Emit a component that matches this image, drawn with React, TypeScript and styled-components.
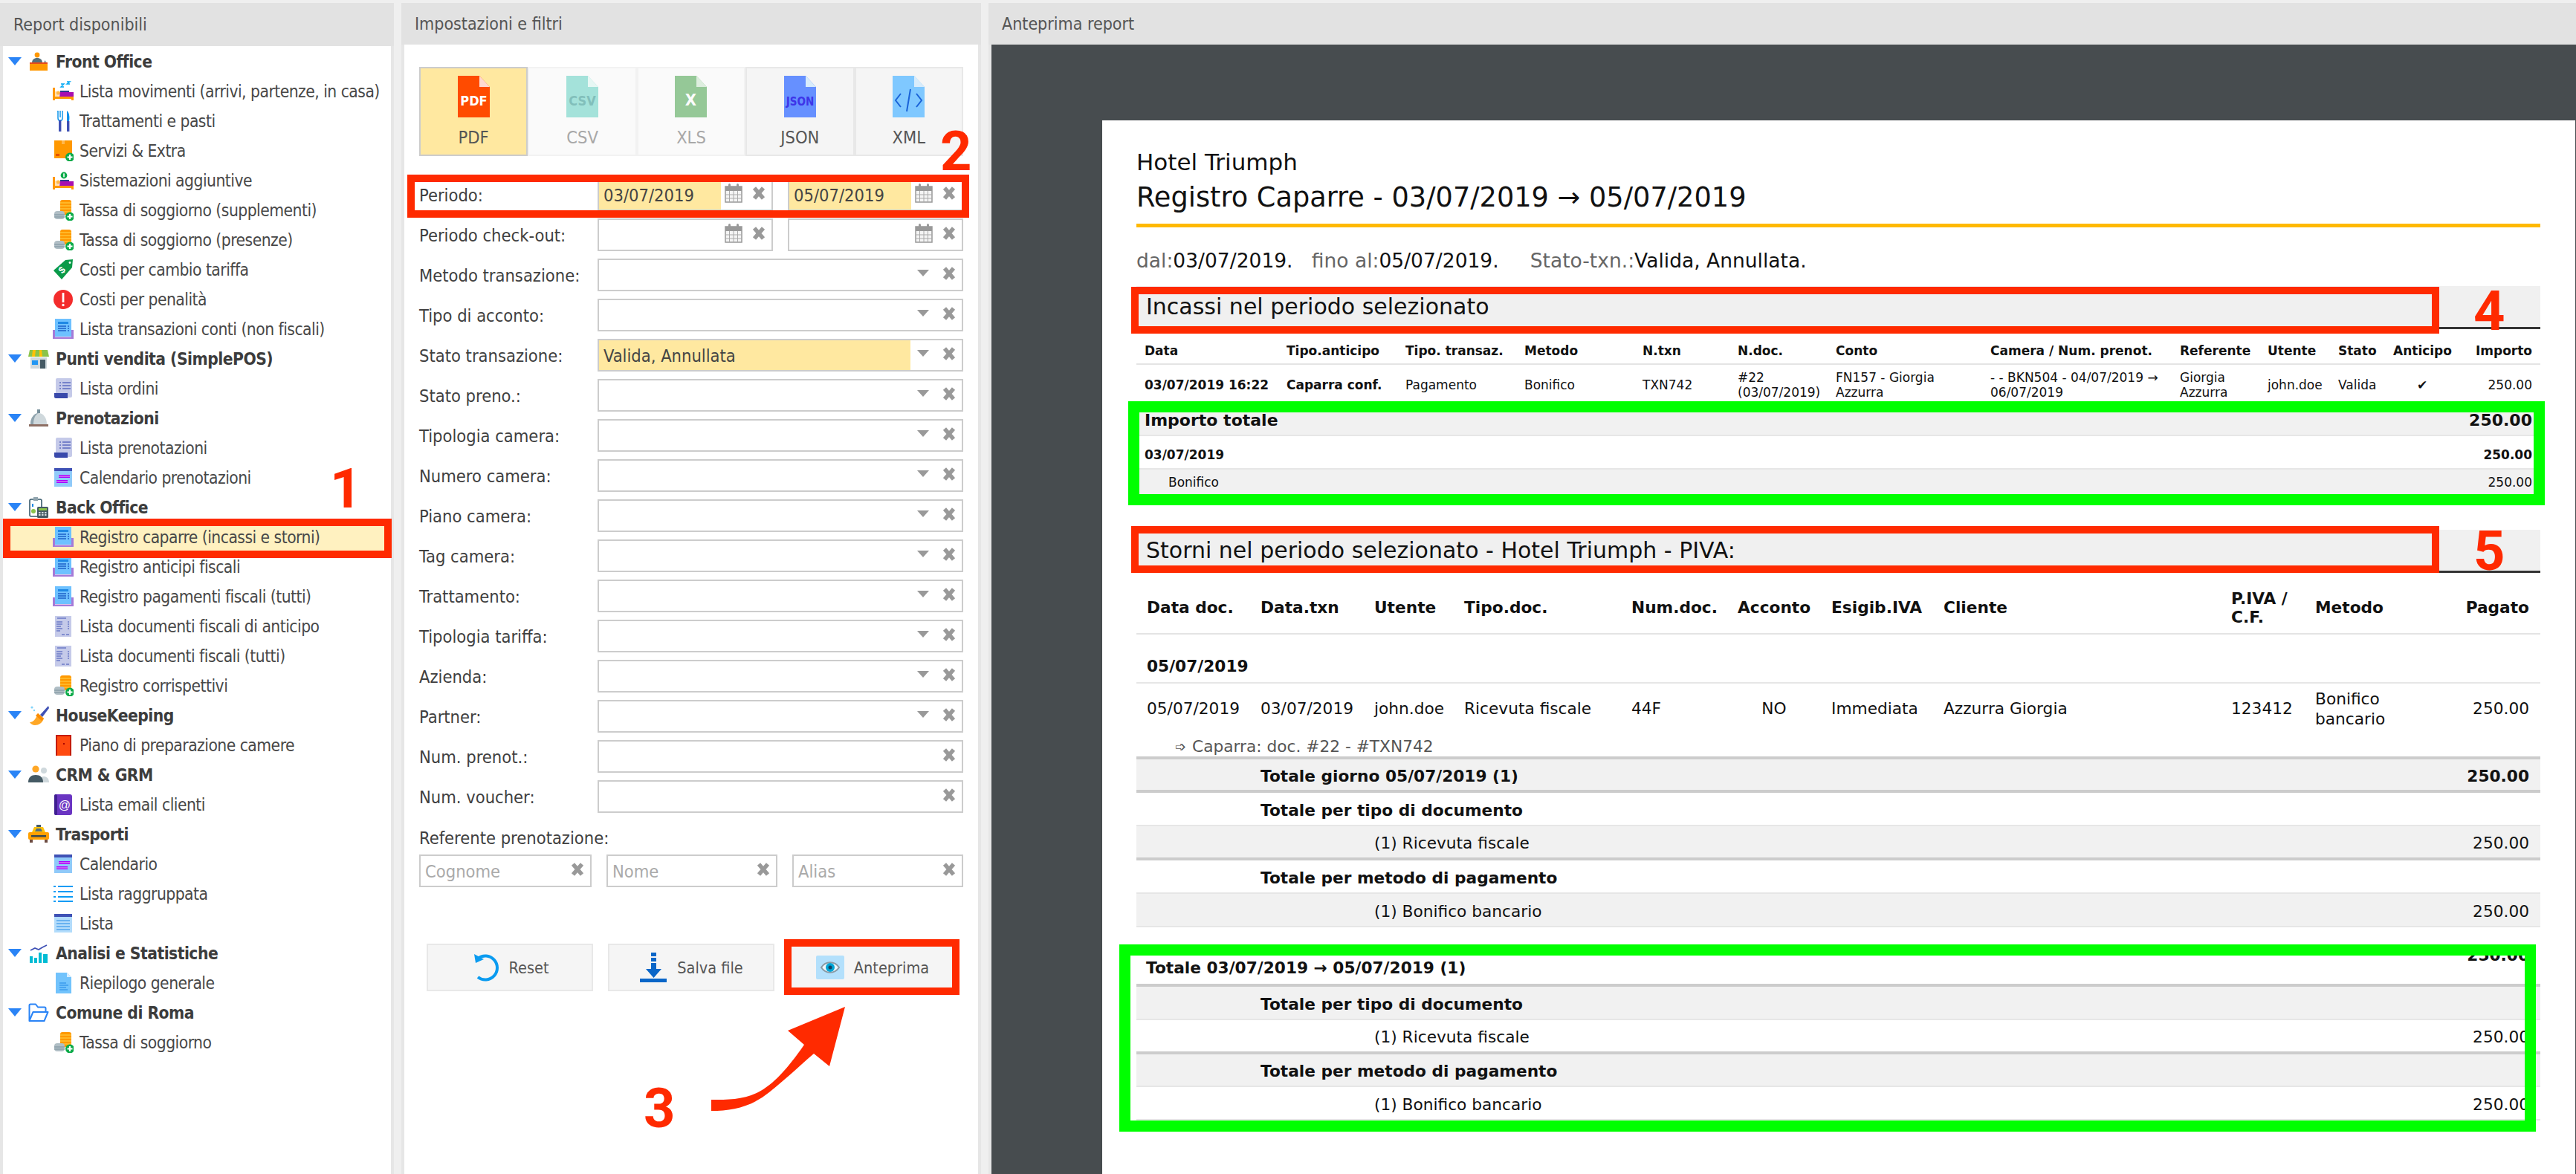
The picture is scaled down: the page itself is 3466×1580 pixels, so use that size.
import React from 'react';
import styled, { createGlobalStyle } from 'styled-components';

const uiFont = '"DejaVu Sans Condensed", "DejaVu Sans", sans-serif';
const docFont = '"DejaVu Sans", sans-serif';

const GlobalStyle = createGlobalStyle`
    html, body {
        margin: 0;
        padding: 0;
        background: #efefef;
    }
    * {
        box-sizing: border-box;
    }
`;

const Page = styled.div`
    position: relative;
    width: 3466px;
    height: 1580px;
    overflow: hidden;
    display: flex;
    gap: 10px;
    padding-top: 4px;
    background: #efefef;
    font-family: ${uiFont};
    font-stretch: condensed;
`;

const Panel = styled.section<{ $width?: number }>`
    display: flex;
    flex-direction: column;
    flex: ${(p) => (p.$width ? `0 0 ${p.$width}px` : '1 1 0')};
    background: #e6e6e6;
    min-width: 0;
`;

const PanelTitle = styled.h2<{ $pad: number; $height: number }>`
    margin: 0;
    height: ${(p) => p.$height}px;
    flex: none;
    display: flex;
    align-items: center;
    padding-left: ${(p) => p.$pad}px;
    background: #e2e2e2;
    color: #555;
    font-size: 23px;
    font-weight: 400;
`;

const PanelBody = styled.div`
    flex: 1;
    margin: 0 4px;
    background: #fff;
`;

/* tree */
const TreeRow = styled.div<{ $child?: boolean; $selected?: boolean }>`
    height: 40px;
    display: flex;
    align-items: center;
    padding-top: 1px;
    padding-left: ${(p) => (p.$child ? 67 : 7)}px;
    background: ${(p) => (p.$selected ? '#fff1c0' : 'transparent')};
    color: ${(p) => (p.$child ? '#484848' : '#3c3c3c')};
    font-size: 22.6px;
    letter-spacing: -0.5px;
    font-weight: ${(p) => (p.$child ? 400 : 700)};
    white-space: nowrap;
`;

const Caret = styled.span`
    width: 0;
    height: 0;
    flex: none;
    margin-right: 9px;
    border-left: 9px solid transparent;
    border-right: 9px solid transparent;
    border-top: 11px solid #2a84f6;
`;

const TreeIconBox = styled.span<{ $child?: boolean }>`
    display: flex;
    flex: none;
    margin-right: ${(p) => (p.$child ? 8 : 9)}px;
`;

const IconSvg = styled.svg`
    display: block;
    width: 28px;
    height: 28px;
`;

/* form */
const Form = styled.div`
    padding: 30px 20px 0;
`;

const FormatBar = styled.div`
    display: grid;
    grid-template-columns: repeat(5, 1fr);
    height: 120px;
    margin-bottom: 30px;
`;

const FormatTab = styled.div<{ $active?: boolean; $disabled?: boolean }>`
    display: flex;
    flex-direction: column;
    align-items: center;
    padding-top: 10px;
    border: 2px solid ${(p) => (p.$active ? '#ccc' : p.$disabled ? '#f2f2f2' : '#e8e8e8')};
    background: ${(p) => (p.$active ? '#ffe8a0' : p.$disabled ? '#fafafa' : '#f5f5f5')};
    color: ${(p) => (p.$disabled ? '#a8a8a8' : '#555')};
    font-size: 23.5px;
`;

const FormatIconSvg = styled.svg<{ $disabled?: boolean }>`
    width: 43px;
    height: 56px;
    flex: none;
    margin-bottom: 13px;
    opacity: ${(p) => (p.$disabled ? 0.55 : 1)};
`;

const FieldRow = styled.div`
    display: flex;
    height: 44px;
    margin-bottom: 10px;
    align-items: center;
`;

const FieldLabel = styled.label`
    flex: 0 0 240px;
    padding-top: 2px;
    color: #404040;
    font-size: 23.5px;
`;

const FieldGroup = styled.div`
    flex: 1;
    display: flex;
    gap: 20px;
    height: 100%;
`;

const Field = styled.div`
    flex: 1;
    min-width: 0;
    display: flex;
    border: 2px solid #ccc;
    background: #fff;
`;

const FieldText = styled.div<{ $filled?: boolean; $placeholder?: boolean }>`
    flex: 1;
    min-width: 0;
    display: flex;
    align-items: center;
    padding: 2px 0 0 6px;
    background: ${(p) => (p.$filled ? '#ffe8a0' : '#fff')};
    color: ${(p) => (p.$placeholder ? '#aaa' : '#444')};
    font-size: 23.5px;
`;

const FieldTools = styled.div`
    flex: none;
    display: flex;
    align-items: center;
    gap: 13px;
    padding: 0 8px 0 5px;
`;

const ClearIcon = styled.svg`
    display: block;
    width: 18px;
    height: 18px;
    margin-top: -5px;
`;

const CalendarIcon = styled.svg`
    display: block;
    width: 24px;
    height: 26px;
    margin-top: -5px;
`;

const DropArrow = styled.span`
    width: 0;
    height: 0;
    margin: -5px 5px 0 4px;
    border-left: 8px solid transparent;
    border-right: 8px solid transparent;
    border-top: 9px solid #999;
`;

const SubLabel = styled.div`
    margin-top: 20px;
    height: 36px;
    color: #404040;
    font-size: 23.5px;
`;

const ReferentGrid = styled.div`
    display: grid;
    grid-template-columns: 232px 230px 230px;
    gap: 20px;
    height: 44px;
`;

const ButtonBar = styled.div`
    display: grid;
    grid-template-columns: repeat(3, 224px);
    gap: 20px;
    margin: 76px 0 0 10px;
`;

const ActionButton = styled.button`
    height: 64px;
    display: flex;
    align-items: center;
    justify-content: center;
    gap: 13px;
    padding: 0;
    border: 2px solid #e8e8e8;
    background: #f5f5f5;
    color: #555;
    font-family: inherit;
    font-stretch: condensed;
    font-size: 21.5px;
`;

const ButtonIcon = styled.svg`
    width: 38px;
    height: 40px;
    flex: none;
`;

/* report */
const PreviewBody = styled.div`
    flex: 1;
    display: flex;
    flex-direction: column;
    margin-left: 4px;
    padding: 102px 1px 0 149px;
    background: #474c4f;
    min-height: 0;
`;

const Paper = styled.div`
    flex: 1;
    background: #fff;
    padding: 36px 47px 0 46px;
    color: #111;
    font-family: ${docFont};
    font-stretch: normal;
`;

const HotelName = styled.div`
    height: 40px;
    line-height: 40px;
    font-size: 31px;
`;

const ReportTitle = styled.h1`
    margin: 6px 0 0;
    padding-bottom: 13px;
    border-bottom: 5px solid #ffb900;
    font-size: 36.7px;
    font-weight: 400;
    line-height: 44px;
`;

const Filters = styled.div`
    height: 40px;
    line-height: 40px;
    margin: 25px 0 14px;
    font-size: 26.5px;
    color: #666;
    white-space: pre;
`;

const FilterValue = styled.span`
    color: #111;
`;

const SectionBand = styled.h3<{ $top?: number }>`
    display: flex;
    align-items: center;
    height: 58px;
    margin: ${(p) => p.$top || 0}px 0 0;
    padding: 0 0 0 13px;
    background: #f0f0f0;
    border-bottom: 3px solid #333;
    font-size: 30px;
    font-weight: 400;
`;

const Cols = styled.div<{ $cols: string; $pad: string; $size: number }>`
    display: grid;
    grid-template-columns: ${(p) => p.$cols};
    padding: ${(p) => p.$pad};
    font-size: ${(p) => p.$size}px;
`;

const HeadRow = styled(Cols)<{ $height: number }>`
    height: ${(p) => p.$height}px;
    align-items: center;
    border-bottom: 2px solid #e4e4e4;
    font-weight: 700;
`;

const DataRow = styled(Cols)<{ $height: number }>`
    height: ${(p) => p.$height}px;
    align-items: center;
    line-height: 1.2;
`;

const Cell = styled.div<{ $align?: string; $bold?: boolean; $trim?: number }>`
    text-align: ${(p) => p.$align || 'left'};
    font-weight: ${(p) => (p.$bold ? 700 : 'inherit')};
    padding-right: ${(p) => p.$trim || 0}px;
    white-space: nowrap;
`;

const SumRow = styled.div<{
    $height: number;
    $size: number;
    $indent: number;
    $right: number;
    $gray?: boolean;
    $bold?: boolean;
    $drop?: number;
    $edge?: string;
}>`
    display: flex;
    align-items: center;
    justify-content: space-between;
    height: ${(p) => p.$height}px;
    padding: ${(p) => p.$drop || 0}px ${(p) => p.$right}px 0 ${(p) => p.$indent}px;
    background: ${(p) => (p.$gray ? '#f1f1f1' : '#fff')};
    border-bottom: ${(p) => p.$edge || 'none'};
    font-size: ${(p) => p.$size}px;
    font-weight: ${(p) => (p.$bold ? 700 : 400)};
`;

const GrandValue = styled.span`
    margin-top: -34px;
`;

const NoteLine = styled.div`
    box-sizing: content-box;
    height: 28px;
    display: flex;
    align-items: center;
    gap: 8px;
    padding: 4px 0 0 52px;
    color: #555;
    font-size: 21.7px;
    border-bottom: 4px solid #ccc;
`;

const NoteGlyph = styled.span`
    font-size: 18px;
`;

/* annotations painted on top of the screenshot */
const Mark = styled.div<{ $x: number; $y: number; $w: number; $h: number; $color: string; $t: number }>`
    position: absolute;
    left: ${(p) => p.$x}px;
    top: ${(p) => p.$y}px;
    width: ${(p) => p.$w}px;
    height: ${(p) => p.$h}px;
    border: ${(p) => p.$t}px solid ${(p) => p.$color};
    pointer-events: none;
`;

const MarkNumber = styled.div<{ $x: number; $y: number }>`
    position: absolute;
    left: ${(p) => p.$x}px;
    top: ${(p) => p.$y}px;
    color: #ff2a00;
    font-family: Roboto, "Liberation Sans", sans-serif;
    font-stretch: normal;
    font-size: 74px;
    font-weight: 700;
    line-height: 74px;
`;

const MarkArrow = styled.svg`
    position: absolute;
    left: 950px;
    top: 1350px;
    width: 195px;
    height: 150px;
`;

type IconName =
    | 'desk' | 'bedZ' | 'cutlery' | 'box' | 'bedInfo' | 'coins' | 'tag' | 'alert' | 'receipt'
    | 'store' | 'listDoc' | 'bell' | 'calendar' | 'clipboard' | 'fiscal' | 'broom' | 'door'
    | 'people' | 'atBook' | 'taxi' | 'bullets' | 'lines' | 'chart' | 'blueDoc' | 'folder';

const Plus = () => (
    <g>
        <circle cx="23" cy="22.5" r="6" fill="#0aaa48" />
        <path d="M23 19v7M19.5 22.5h7" stroke="#fff" strokeWidth="2.2" />
    </g>
);

const Bed = () => (
    <g>
        <rect x="0" y="9" width="3" height="17" fill="#ff9800" />
        <rect x="0" y="21" width="28" height="3" fill="#ff9800" />
        <rect x="25" y="15" width="3" height="11" fill="#ff9800" />
        <rect x="3" y="14" width="5" height="7" fill="#ffe0b2" />
        <circle cx="7.5" cy="16" r="2.6" fill="#ffb74d" />
        <path d="M10 15h18v6H9z" fill="#a80fb0" />
        <path d="M10 13h12v2H10z" fill="#2b3990" />
    </g>
);

const icons: Record<IconName, React.ReactNode> = {
    desk: (
        <g>
            <circle cx="12" cy="5" r="3.4" fill="#ff9800" />
            <path d="M5 16c0-5 3-7 7-7s7 2 7 7z" fill="#546e7a" />
            <path d="M20 16l2.5-4 3 4z" fill="#90a4ae" />
            <rect x="2" y="15" width="24" height="3" fill="#e64a19" />
            <rect x="2" y="17" width="24" height="9" fill="#ff9800" />
        </g>
    ),
    bedZ: (
        <g>
            <Bed />
            <path d="M11 4h4l-4 4h4M19 1h4l-4 3h4" stroke="#03a9f4" strokeWidth="1.4" fill="none" />
        </g>
    ),
    cutlery: (
        <g>
            <path d="M7 0v9M10 0v9M13 0v9M6 0h1v10c0 2 1 3 2 3h2c1 0 2-1 2-3V0" stroke="#0090ea" strokeWidth="1.4" fill="none" />
            <rect x="8" y="13" width="3.4" height="15" fill="#3f51b5" />
            <path d="M19 0c3 2 4 8 3 14h-3z" fill="#0090ea" />
            <rect x="19" y="14" width="3.4" height="14" fill="#3f51b5" />
        </g>
    ),
    box: (
        <g>
            <rect x="2" y="0" width="24" height="24" fill="#ff9800" />
            <rect x="12" y="0" width="4" height="5" fill="#ffb74d" />
            <rect x="4" y="18" width="5" height="3" fill="#e65100" />
            <Plus />
        </g>
    ),
    bedInfo: (
        <g>
            <Bed />
            <circle cx="15" cy="7" r="4.4" fill="#0aaa48" />
            <rect x="14.2" y="4.4" width="1.6" height="5" fill="#fff" />
        </g>
    ),
    coins: (
        <g>
            <rect x="10" y="0" width="15" height="20" rx="3" fill="#ff9800" />
            <path d="M10 4h15M10 8h15M10 12h15M10 16h15" stroke="#ffd54f" strokeWidth="1.2" />
            <rect x="2" y="15" width="14" height="11" rx="4" fill="#b0bec5" />
            <path d="M2 20h14M2 23h14" stroke="#78909c" strokeWidth="1" />
            <Plus />
        </g>
    ),
    tag: (
        <g>
            <path d="M1 15L17 1l10-1-1 11L12 27z" fill="#0a9a48" />
            <circle cx="23" cy="4.5" r="1.4" fill="#fff" />
            <text x="9" y="19" fontSize="13" fontWeight="700" fill="#fff" transform="rotate(-45 12 15)" fontFamily="Liberation Sans">$</text>
        </g>
    ),
    alert: (
        <g>
            <circle cx="14" cy="14" r="13" fill="#f32c2c" />
            <rect x="12.6" y="5" width="2.8" height="13" fill="#fff" />
            <circle cx="14" cy="21.5" r="1.7" fill="#fff" />
        </g>
    ),
    receipt: (
        <g>
            <path d="M0 15v12h28V15z" fill="#a57ad8" />
            <rect x="3" y="0" width="22" height="24" fill="#6ec1ff" />
            <rect x="7" y="4" width="14" height="3" fill="#1e88e5" />
            <path d="M7 10h11M7 13h11M7 16h11M20 10h2M20 13h2M20 16h2" stroke="#1e60c8" strokeWidth="1.3" />
            <rect x="3" y="24" width="22" height="1" fill="#e1bee7" />
        </g>
    ),
    store: (
        <g>
            <rect x="3" y="12" width="22" height="15" fill="#cfd8dc" />
            <rect x="5" y="16" width="8" height="6" fill="#2196f3" />
            <rect x="16" y="15" width="7" height="12" fill="#455a64" />
            <path d="M2 2h24l2 9H0z" fill="#8bc34a" />
            <path d="M6 2l-1 9h4l1-9zM15 2l0 9h4l-1-9z" fill="#ffc107" />
        </g>
    ),
    listDoc: (
        <g>
            <rect x="4" y="0" width="22" height="26" rx="2" fill="#c5cae9" />
            <path d="M9 6h2M13 6h11M9 10h2M13 10h11M9 14h2M13 14h11" stroke="#5c6bc0" strokeWidth="1.4" />
            <path d="M2 20h18v7H4c-1 0-2-1-2-2z" fill="#3949ab" />
        </g>
    ),
    bell: (
        <g>
            <rect x="12" y="2" width="4" height="5" fill="#78909c" />
            <path d="M3 22c0-9 5-15 11-15s11 6 11 15z" fill="#cfd8dc" />
            <path d="M3 22c0-9 5-15 11-15-5 2-7 8-7 15z" fill="#90a4ae" />
            <rect x="1" y="22" width="26" height="3" fill="#8d6e63" />
        </g>
    ),
    calendar: (
        <g>
            <rect x="2" y="2" width="24" height="24" fill="#90caf9" />
            <rect x="2" y="1" width="24" height="4" fill="#3f51b5" />
            <path d="M8 10h15v4H8zM5 17h15v4H5z" fill="#aa00ff" />
            <path d="M8 12h15M5 19h15" stroke="#e1bee7" strokeWidth="1" />
        </g>
    ),
    clipboard: (
        <g>
            <rect x="2" y="3" width="16" height="23" rx="2" fill="#fff" stroke="#37596b" strokeWidth="1.6" />
            <rect x="7" y="0" width="6" height="5" fill="#90a4ae" />
            <rect x="5" y="9" width="2" height="4" fill="#1e88e5" />
            <circle cx="7" cy="19" r="3" fill="#8bc34a" />
            <rect x="12" y="13" width="15" height="15" rx="1.5" fill="#455a64" />
            <rect x="14" y="15" width="11" height="3" fill="#8bc34a" />
            <path d="M14 21h11M14 24h11" stroke="#cfd8dc" strokeWidth="2" strokeDasharray="2.5 1.5" />
        </g>
    ),
    fiscal: (
        <g>
            <rect x="3" y="0" width="22" height="28" fill="#c5cae9" />
            <path d="M6 3h12M5 8h8M5 11h8M5 14h6M5 17h8M5 20h5M20 8h2M20 11h2M20 14h2M20 17h2M12 25h4M18 25h4" stroke="#3f51b5" strokeWidth="1.2" />
        </g>
    ),
    broom: (
        <g>
            <circle cx="5" cy="3" r="1.6" fill="#81d4fa" />
            <circle cx="8" cy="7" r="1.2" fill="#81d4fa" />
            <path d="M27 1l-11 12 3 3L28 4z" fill="#3f51b5" />
            <path d="M13 11l8 7c-2 6-7 9-12 9-3 0-6-2-7-4 5 0 8-4 11-12z" fill="#ffa726" />
            <path d="M13 11l8 7-3 3-8-7z" fill="#fb8c00" />
        </g>
    ),
    door: (
        <g>
            <rect x="4" y="0" width="21" height="28" fill="#c41c00" />
            <rect x="6" y="2" width="17" height="26" fill="#ff4a10" />
            <rect x="14" y="11" width="2" height="2" fill="#a00" />
        </g>
    ),
    people: (
        <g>
            <circle cx="21" cy="8" r="4" fill="#cfd8dc" />
            <path d="M15 24c0-6 3-8 6-8s7 2 7 8z" fill="#cfd8dc" />
            <circle cx="10" cy="6" r="4.6" fill="#ffa726" />
            <path d="M0 24c0-7 4-10 10-10s10 3 10 10z" fill="#455a64" />
        </g>
    ),
    atBook: (
        <g>
            <rect x="2" y="0" width="24" height="28" rx="3" fill="#6a35c2" />
            <rect x="2" y="0" width="4" height="28" rx="2" fill="#3f1f91" />
            <text x="15.5" y="20" fontSize="16" textAnchor="middle" fill="#fff" fontFamily="Liberation Sans">@</text>
        </g>
    ),
    taxi: (
        <g>
            <rect x="11" y="1" width="6" height="3" fill="#455a64" />
            <path d="M5 11l3-7h12l3 7z" fill="#ffc107" />
            <path d="M9 10l2-4h6l2 4z" fill="#546e7a" />
            <rect x="0" y="11" width="28" height="10" rx="2" fill="#ffa000" />
            <rect x="4" y="15" width="20" height="2.5" fill="#37474f" />
            <rect x="2" y="21" width="4" height="4" fill="#6d4c41" />
            <rect x="22" y="21" width="4" height="4" fill="#6d4c41" />
        </g>
    ),
    bullets: (
        <g>
            <path d="M1 4h3M7 4h20M1 11h3M7 11h20M1 18h3M7 18h20M1 24h3M7 24h20" stroke="#0a9bf5" strokeWidth="2.2" />
        </g>
    ),
    lines: (
        <g>
            <rect x="2" y="2" width="24" height="24" fill="#b3dcfb" />
            <rect x="2" y="1" width="24" height="4" fill="#3f51b5" />
            <path d="M5 10h18M5 14h18M5 18h18M5 22h18" stroke="#1e88e5" strokeWidth="1.1" />
        </g>
    ),
    chart: (
        <g>
            <path d="M3 10l6-3 5 2 5-3 6-3" stroke="#3f51b5" strokeWidth="1.8" fill="none" />
            <rect x="2" y="18" width="4" height="9" fill="#00bcd4" />
            <rect x="8" y="20" width="4" height="7" fill="#00bcd4" />
            <rect x="14" y="13" width="4" height="14" fill="#00bcd4" />
            <rect x="20" y="15" width="6" height="12" fill="#00bcd4" />
        </g>
    ),
    blueDoc: (
        <g>
            <path d="M4 0h15l6 6v22H4z" fill="#72c3fc" />
            <path d="M19 0l6 6h-6z" fill="#d6eeff" />
            <path d="M9 14h9M9 17h12M9 20h9M9 23h11" stroke="#1e88e5" strokeWidth="1.2" />
        </g>
    ),
    folder: (
        <g>
            <path d="M1.5 25V4c0-1 .5-1.5 1.5-1.5h7l3 4h9c1 0 1.5.5 1.5 1.5v4M1.5 25l5-12h20l-5 12z" fill="#fff" stroke="#2a84f6" strokeWidth="2" strokeLinejoin="round" />
        </g>
    ),
};

const TreeIcon = ({ name }: { name: IconName }) => <IconSvg viewBox="0 0 28 28">{icons[name]}</IconSvg>;

const tree: { label: string; icon: IconName; items: { label: string; icon: IconName; selected?: boolean }[] }[] = [
    {
        label: 'Front Office',
        icon: 'desk',
        items: [
            { label: 'Lista movimenti (arrivi, partenze, in casa)', icon: 'bedZ' },
            { label: 'Trattamenti e pasti', icon: 'cutlery' },
            { label: 'Servizi & Extra', icon: 'box' },
            { label: 'Sistemazioni aggiuntive', icon: 'bedInfo' },
            { label: 'Tassa di soggiorno (supplementi)', icon: 'coins' },
            { label: 'Tassa di soggiorno (presenze)', icon: 'coins' },
            { label: 'Costi per cambio tariffa', icon: 'tag' },
            { label: 'Costi per penalità', icon: 'alert' },
            { label: 'Lista transazioni conti (non fiscali)', icon: 'receipt' },
        ],
    },
    { label: 'Punti vendita (SimplePOS)', icon: 'store', items: [{ label: 'Lista ordini', icon: 'listDoc' }] },
    {
        label: 'Prenotazioni',
        icon: 'bell',
        items: [
            { label: 'Lista prenotazioni', icon: 'listDoc' },
            { label: 'Calendario prenotazioni', icon: 'calendar' },
        ],
    },
    {
        label: 'Back Office',
        icon: 'clipboard',
        items: [
            { label: 'Registro caparre (incassi e storni)', icon: 'receipt', selected: true },
            { label: 'Registro anticipi fiscali', icon: 'receipt' },
            { label: 'Registro pagamenti fiscali (tutti)', icon: 'receipt' },
            { label: 'Lista documenti fiscali di anticipo', icon: 'fiscal' },
            { label: 'Lista documenti fiscali (tutti)', icon: 'fiscal' },
            { label: 'Registro corrispettivi', icon: 'coins' },
        ],
    },
    { label: 'HouseKeeping', icon: 'broom', items: [{ label: 'Piano di preparazione camere', icon: 'door' }] },
    { label: 'CRM & GRM', icon: 'people', items: [{ label: 'Lista email clienti', icon: 'atBook' }] },
    {
        label: 'Trasporti',
        icon: 'taxi',
        items: [
            { label: 'Calendario', icon: 'calendar' },
            { label: 'Lista raggruppata', icon: 'bullets' },
            { label: 'Lista', icon: 'lines' },
        ],
    },
    { label: 'Analisi e Statistiche', icon: 'chart', items: [{ label: 'Riepilogo generale', icon: 'blueDoc' }] },
    { label: 'Comune di Roma', icon: 'folder', items: [{ label: 'Tassa di soggiorno', icon: 'coins' }] },
];

const formats: { label: string; fill: string; fold: string; text?: string; textColor?: string; disabled?: boolean; active?: boolean }[] = [
    { label: 'PDF', fill: '#ff4b00', fold: '#ffd9d0', text: 'PDF', textColor: '#fff', active: true },
    { label: 'CSV', fill: '#5fcfc0', fold: '#d8f5f0', text: 'CSV', textColor: '#1f8f88', disabled: true },
    { label: 'XLS', fill: '#43a047', fold: '#c8e6c9', text: 'X', textColor: '#fff', disabled: true },
    { label: 'JSON', fill: '#6690ff', fold: '#d8ecfb', text: 'JSON', textColor: '#3d35e8' },
    { label: 'XML', fill: '#7fc8ff', fold: '#d8ecfb' },
];

const FormatIcon = ({ f }: { f: (typeof formats)[number] }) => (
    <FormatIconSvg viewBox="0 0 43 56" $disabled={f.disabled}>
        <path d="M0 0h29l14 15v41H0z" fill={f.fill} />
        <path d="M29 0l14 15H29z" fill={f.fold} />
        {f.text ? (
            <text
                x="21.5"
                y="40"
                textAnchor="middle"
                fontSize={f.text === 'X' ? 22 : f.text === 'JSON' ? 15 : 18}
                fontWeight="700"
                fill={f.textColor}
                fontFamily={uiFont}
            >
                {f.text}
            </text>
        ) : (
            <path d="M11 24l-7 9 7 9M32 24l7 9-7 9M24 18l-5 30" stroke="#1a63d8" strokeWidth="2" fill="none" />
        )}
    </FormatIconSvg>
);

const Clear = () => (
    <ClearIcon viewBox="0 0 18 18">
        <path d="M3 2l12 14M15 2L3 16" stroke="#999" strokeWidth="5.5" />
    </ClearIcon>
);

const Calendar = () => (
    <CalendarIcon viewBox="0 0 24 26">
        <rect x="1" y="4" width="22" height="21" fill="#f4f4f4" stroke="#999" strokeWidth="1.5" />
        <rect x="1" y="4" width="22" height="6" fill="#999" />
        <rect x="5" y="0" width="3" height="8" rx="1.5" fill="#999" />
        <rect x="16" y="0" width="3" height="8" rx="1.5" fill="#999" />
        <path d="M1 15h22M1 20h22M6.5 10v15M12 10v15M17.5 10v15" stroke="#aaa" strokeWidth="1" />
    </CalendarIcon>
);

type Kind = 'date' | 'select' | 'text';

const Control = ({ kind, value, filled, placeholder }: { kind: Kind; value?: string; filled?: boolean; placeholder?: string }) => (
    <Field>
        <FieldText $filled={filled} $placeholder={!!placeholder}>
            {value || placeholder}
        </FieldText>
        <FieldTools>
            {kind === 'date' && <Calendar />}
            {kind === 'select' && <DropArrow />}
            <Clear />
        </FieldTools>
    </Field>
);

const selects = ['Metodo transazione:', 'Tipo di acconto:', 'Stato transazione:', 'Stato preno.:', 'Tipologia camera:', 'Numero camera:', 'Piano camera:', 'Tag camera:', 'Trattamento:', 'Tipologia tariffa:', 'Azienda:', 'Partner:'];

const grid1 = '191px 160px 160px 159px 128px 132px 208px 255px 118px 95px 74px 78px 109px';
const grid2 = '153px 153px 121px 225px 143px 126px 151px 387px 113px 160px 1fr';

const head1 = ['Data', 'Tipo.anticipo', 'Tipo. transaz.', 'Metodo', 'N.txn', 'N.doc.', 'Conto', 'Camera / Num. prenot.', 'Referente', 'Utente', 'Stato'];
const head2 = ['Data doc.', 'Data.txn', 'Utente', 'Tipo.doc.', 'Num.doc.'];

const thick = '4px solid #ccc';
const thin = '2px solid #e6e6e6';
const body2 = 21.7;

const App = () => (
    <Page>
        <GlobalStyle />
        <Panel $width={530}>
            <PanelTitle $pad={18} $height={58}>Report disponibili</PanelTitle>
            <PanelBody>
                {tree.map((g) => (
                    <React.Fragment key={g.label}>
                        <TreeRow>
                            <Caret />
                            <TreeIconBox>
                                <TreeIcon name={g.icon} />
                            </TreeIconBox>
                            {g.label}
                        </TreeRow>
                        {g.items.map((i) => (
                            <TreeRow key={i.label} $child $selected={i.selected}>
                                <TreeIconBox $child>
                                    <TreeIcon name={i.icon} />
                                </TreeIconBox>
                                {i.label}
                            </TreeRow>
                        ))}
                    </React.Fragment>
                ))}
            </PanelBody>
        </Panel>

        <Panel $width={780}>
            <PanelTitle $pad={18} $height={56}>Impostazioni e filtri</PanelTitle>
            <PanelBody>
                <Form>
                    <FormatBar>
                        {formats.map((f) => (
                            <FormatTab key={f.label} $active={f.active} $disabled={f.disabled}>
                                <FormatIcon f={f} />
                                {f.label}
                            </FormatTab>
                        ))}
                    </FormatBar>
                    <FieldRow>
                        <FieldLabel>Periodo:</FieldLabel>
                        <FieldGroup>
                            <Control kind="date" value="03/07/2019" filled />
                            <Control kind="date" value="05/07/2019" filled />
                        </FieldGroup>
                    </FieldRow>
                    <FieldRow>
                        <FieldLabel>Periodo check-out:</FieldLabel>
                        <FieldGroup>
                            <Control kind="date" />
                            <Control kind="date" />
                        </FieldGroup>
                    </FieldRow>
                    {selects.map((s) => (
                        <FieldRow key={s}>
                            <FieldLabel>{s}</FieldLabel>
                            <FieldGroup>
                                {s === 'Stato transazione:' ? (
                                    <Control kind="select" value="Valida, Annullata" filled />
                                ) : (
                                    <Control kind="select" />
                                )}
                            </FieldGroup>
                        </FieldRow>
                    ))}
                    <FieldRow>
                        <FieldLabel>Num. prenot.:</FieldLabel>
                        <FieldGroup>
                            <Control kind="text" />
                        </FieldGroup>
                    </FieldRow>
                    <FieldRow>
                        <FieldLabel>Num. voucher:</FieldLabel>
                        <FieldGroup>
                            <Control kind="text" />
                        </FieldGroup>
                    </FieldRow>
                    <SubLabel>Referente prenotazione:</SubLabel>
                    <ReferentGrid>
                        <Control kind="text" placeholder="Cognome" />
                        <Control kind="text" placeholder="Nome" />
                        <Control kind="text" placeholder="Alias" />
                    </ReferentGrid>
                    <ButtonBar>
                        <ActionButton>
                            <ButtonIcon viewBox="0 0 38 40">
                                <path d="M9 8a16 16 0 1 1 0 25" fill="none" stroke="#0a9bf0" strokeWidth="4" />
                                <path d="M4 2l2 12 11-5z" fill="#0a9bf0" />
                            </ButtonIcon>
                            Reset
                        </ActionButton>
                        <ActionButton>
                            <ButtonIcon viewBox="0 0 38 40">
                                <path d="M16 0h7v5h-7zM16 7h7v5h-7zM16 14h7v8h7L19.5 34 9 22h7z" fill="#0a66c8" />
                                <rect x="1" y="35" width="36" height="5" fill="#0a66c8" />
                            </ButtonIcon>
                            Salva file
                        </ActionButton>
                        <ActionButton>
                            <ButtonIcon viewBox="0 0 38 40">
                                <rect width="38" height="32" y="4" rx="2" fill="#b3e0fc" />
                                <path d="M7 20c6-9 18-9 24 0-6 9-18 9-24 0z" fill="#eef7fc" stroke="#8a9aa4" strokeWidth="2" />
                                <circle cx="19" cy="20" r="6" fill="#00a5d6" />
                                <circle cx="19" cy="20" r="2.5" fill="#154260" />
                            </ButtonIcon>
                            Anteprima
                        </ActionButton>
                    </ButtonBar>
                </Form>
            </PanelBody>
        </Panel>

        <Panel>
            <PanelTitle $pad={18} $height={56}>Anteprima report</PanelTitle>
            <PreviewBody>
                <Paper>
                    <HotelName>Hotel Triumph</HotelName>
                    <ReportTitle>Registro Caparre - 03/07/2019 → 05/07/2019</ReportTitle>
                    <Filters>
                        dal:<FilterValue>03/07/2019.</FilterValue>{'   '}fino al:<FilterValue>05/07/2019.</FilterValue>
                        {'     '}Stato-txn.:<FilterValue>Valida, Annullata.</FilterValue>
                    </Filters>

                    <SectionBand>Incassi nel periodo selezionato</SectionBand>
                    <HeadRow $cols={grid1} $pad="11px 11px 0 11px" $size={17} $height={48}>
                        {head1.map((h) => (
                            <Cell key={h}>{h}</Cell>
                        ))}
                        <Cell $align="center">Anticipo</Cell>
                        <Cell $align="right">Importo</Cell>
                    </HeadRow>
                    <DataRow $cols={grid1} $pad="2px 11px 0 11px" $size={17} $height={52}>
                        <Cell $bold>03/07/2019 16:22</Cell>
                        <Cell $bold>Caparra conf.</Cell>
                        <Cell>Pagamento</Cell>
                        <Cell>Bonifico</Cell>
                        <Cell>TXN742</Cell>
                        <Cell>#22<br />(03/07/2019)</Cell>
                        <Cell>FN157 - Giorgia<br />Azzurra</Cell>
                        <Cell>- - BKN504 - 04/07/2019 →<br />06/07/2019</Cell>
                        <Cell>Giorgia<br />Azzurra</Cell>
                        <Cell>john.doe</Cell>
                        <Cell>Valida</Cell>
                        <Cell $align="center">✔</Cell>
                        <Cell $align="right">250.00</Cell>
                    </DataRow>
                    <SumRow $gray $bold $height={44} $size={22} $indent={11} $right={11} $drop={2} $edge={thin}>
                        <span>Importo totale</span>
                        <span>250.00</span>
                    </SumRow>
                    <SumRow $bold $height={45} $size={17} $indent={11} $right={11} $drop={7} $edge={thin}>
                        <span>03/07/2019</span>
                        <span>250.00</span>
                    </SumRow>
                    <SumRow $gray $height={34} $size={17} $indent={43} $right={11}>
                        <span>Bonifico</span>
                        <span>250.00</span>
                    </SumRow>

                    <SectionBand $top={47}>Storni nel periodo selezionato - Hotel Triumph - PIVA:</SectionBand>
                    <HeadRow $cols={grid2} $pad="12px 15px 0 14px" $size={body2} $height={83}>
                        {head2.map((h) => (
                            <Cell key={h}>{h}</Cell>
                        ))}
                        <Cell $align="center" $trim={28}>Acconto</Cell>
                        <Cell>Esigib.IVA</Cell>
                        <Cell>Cliente</Cell>
                        <Cell>P.IVA /<br />C.F.</Cell>
                        <Cell>Metodo</Cell>
                        <Cell $align="right">Pagato</Cell>
                    </HeadRow>
                    <SumRow $bold $height={66} $size={body2} $indent={14} $right={15} $drop={20} $edge={thin}>
                        <span>05/07/2019</span>
                    </SumRow>
                    <DataRow $cols={grid2} $pad="3px 15px 0 14px" $size={body2} $height={66}>
                        <Cell>05/07/2019</Cell>
                        <Cell>03/07/2019</Cell>
                        <Cell>john.doe</Cell>
                        <Cell>Ricevuta fiscale</Cell>
                        <Cell>44F</Cell>
                        <Cell $align="center" $trim={28}>NO</Cell>
                        <Cell>Immediata</Cell>
                        <Cell>Azzurra Giorgia</Cell>
                        <Cell>123412</Cell>
                        <Cell>Bonifico<br />bancario</Cell>
                        <Cell $align="right">250.00</Cell>
                    </DataRow>
                    <NoteLine>
                        <NoteGlyph>➩</NoteGlyph>
                        Caparra: doc. #22 - #TXN742
                    </NoteLine>
                    <SumRow $gray $bold $height={45} $size={body2} $indent={167} $right={15} $drop={3} $edge={thick}>
                        <span>Totale giorno 05/07/2019 (1)</span>
                        <span>250.00</span>
                    </SumRow>
                    <SumRow $bold $height={45} $size={body2} $indent={167} $right={15} $drop={3} $edge={thin}>
                        <span>Totale per tipo di documento</span>
                    </SumRow>
                    <SumRow $gray $height={46} $size={body2} $indent={320} $right={15} $drop={3} $edge={thick}>
                        <span>(1) Ricevuta fiscale</span>
                        <span>250.00</span>
                    </SumRow>
                    <SumRow $bold $height={45} $size={body2} $indent={167} $right={15} $drop={3} $edge={thin}>
                        <span>Totale per metodo di pagamento</span>
                    </SumRow>
                    <SumRow $gray $height={45} $size={body2} $indent={320} $right={15} $drop={3} $edge={thin}>
                        <span>(1) Bonifico bancario</span>
                        <span>250.00</span>
                    </SumRow>

                    <SumRow $bold $height={80} $size={body2} $indent={13} $right={15} $drop={32} $edge={thick}>
                        <span>Totale 03/07/2019 → 05/07/2019 (1)</span>
                        <GrandValue>250.00</GrandValue>
                    </SumRow>
                    <SumRow $gray $bold $height={45} $size={body2} $indent={167} $right={15} $drop={3} $edge={thin}>
                        <span>Totale per tipo di documento</span>
                    </SumRow>
                    <SumRow $height={46} $size={body2} $indent={320} $right={15} $drop={3} $edge={thick}>
                        <span>(1) Ricevuta fiscale</span>
                        <span>250.00</span>
                    </SumRow>
                    <SumRow $gray $bold $height={44} $size={body2} $indent={167} $right={15} $drop={3} $edge={thin}>
                        <span>Totale per metodo di pagamento</span>
                    </SumRow>
                    <SumRow $height={45} $size={body2} $indent={320} $right={15} $drop={3} $edge={thin}>
                        <span>(1) Bonifico bancario</span>
                        <span>250.00</span>
                    </SumRow>
                </Paper>
            </PreviewBody>
        </Panel>

        <Mark $x={4} $y={698} $w={523} $h={53} $color="#ff2a00" $t={10} />
        <Mark $x={548} $y={235} $w={756} $h={58} $color="#ff2a00" $t={10} />
        <Mark $x={1055} $y={1264} $w={236} $h={75} $color="#ff2a00" $t={10} />
        <Mark $x={1522} $y={386} $w={1760} $h={63} $color="#ff2a00" $t={10} />
        <Mark $x={1522} $y={708} $w={1760} $h={63} $color="#ff2a00" $t={10} />
        <Mark $x={1518} $y={540} $w={1906} $h={140} $color="#00ff00" $t={15} />
        <Mark $x={1506} $y={1271} $w={1906} $h={252} $color="#00ff00" $t={15} />
        <MarkNumber $x={444} $y={621}>1</MarkNumber>
        <MarkNumber $x={1265} $y={167}>2</MarkNumber>
        <MarkNumber $x={866} $y={1455}>3</MarkNumber>
        <MarkNumber $x={3328} $y={382}>4</MarkNumber>
        <MarkNumber $x={3328} $y={705}>5</MarkNumber>
        <MarkArrow viewBox="0 0 195 150">
            <path d="M187 5L110 37L132 56C110 88 90 110 70 120C50 130 30 130 7 130V145C35 145 60 140 85 120C110 100 125 85 145 68L166 85Z" fill="#ff2a00" />
        </MarkArrow>
    </Page>
);

export default App;
